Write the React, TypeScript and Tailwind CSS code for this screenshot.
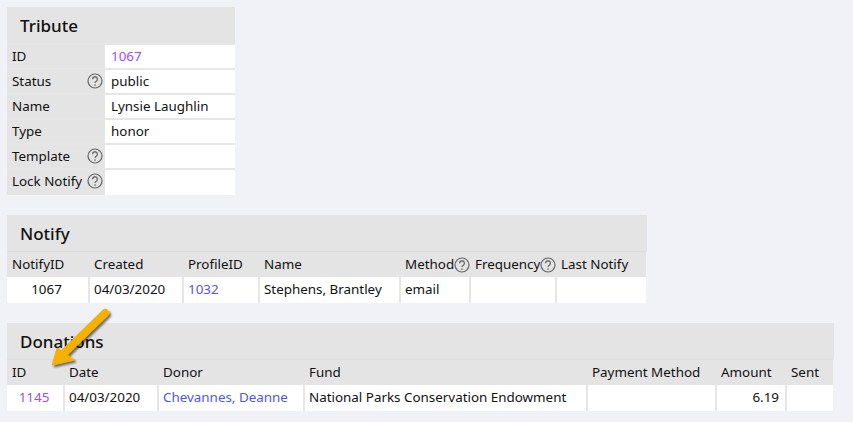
import { type FC, type ReactNode } from 'react';

const font = "font-['Noto_Sans',sans-serif]";

const Help: FC = () => (
    <svg width="16" height="16" viewBox="0 0 16 16" className="shrink-0">
        <circle cx="8" cy="8" r="7" fill="none" stroke="#666" strokeWidth="1.2" />
        <path d="M5.6 6.2a2.4 2.4 0 1 1 3.7 2c-.9.5-1.3.9-1.3 1.8" fill="none" stroke="#666" strokeWidth="1.3" />
        <circle cx="8" cy="12" r=".85" fill="#666" />
    </svg>
);

const Title: FC<{ children: ReactNode }> = ({ children }) => (
    <div className="h-[36px] pl-[13px] pt-[1px] flex items-center text-[17px] font-medium text-[#111] bg-[#e4e4e4]">{children}</div>
);

const tributeRows: { label: string; help?: boolean; value: string; link?: boolean }[] = [
    { label: 'ID', value: '1067', link: true },
    { label: 'Status', help: true, value: 'public' },
    { label: 'Name', value: 'Lynsie Laughlin' },
    { label: 'Type', value: 'honor' },
    { label: 'Template', help: true, value: '' },
    { label: 'Lock Notify', help: true, value: '' },
];

type Col = { label: string; width: string; help?: boolean };

const HeadRow: FC<{ cols: Col[] }> = ({ cols }) => (
    <div className="flex h-[26px] mr-px border-t border-[#dcdcdc] bg-[#e4e4e4]">
        {cols.map((c) => (
            <div key={c.label} className={`${c.width} pl-[6px] first:pl-[5px] flex items-center whitespace-nowrap`}>
                {c.label}
                {c.help && <Help />}
            </div>
        ))}
    </div>
);

const notifyCols: Col[] = [
    { label: 'NotifyID', width: 'w-[81px]' },
    { label: 'Created', width: 'w-[94px]' },
    { label: 'ProfileID', width: 'w-[76px]' },
    { label: 'Name', width: 'w-[141px]' },
    { label: 'Method', width: 'w-[70px]', help: true },
    { label: 'Frequency', width: 'w-[86px]', help: true },
    { label: 'Last Notify', width: 'w-[90px]' },
];

const donationCols: Col[] = [
    { label: 'ID', width: 'w-[56px]' },
    { label: 'Date', width: 'w-[94px]' },
    { label: 'Donor', width: 'w-[146px]' },
    { label: 'Fund', width: 'w-[283px]' },
    { label: 'Payment Method', width: 'w-[129px]' },
    { label: 'Amount', width: 'w-[70px]' },
    { label: 'Sent', width: 'w-[47px]' },
];

const Cell: FC<{ width: string; className?: string; children?: ReactNode }> = ({ width, className = '', children }) => (
    <div className={`${width} h-full flex items-center pl-[4px] pr-[6px] pb-[2px] border-l-2 border-[#e6e6e6] first:border-l-0 whitespace-nowrap ${className}`}>
        {children}
    </div>
);

export default function App() {
    return (
        <div className={`relative w-[853px] h-[422px] overflow-hidden bg-[#f0f2f8] pt-[7px] pl-[7px] text-[13.4px] text-[#111] ${font}`}>
            <section className="w-[228px]">
                <Title>Tribute</Title>
                {tributeRows.map((r) => (
                    <div key={r.label} className="flex h-[25px] last:h-[27px] border-t-2 border-[#e6e6e6] first:border-t first:border-[#dcdcdc]">
                        <div className="w-[98px] bg-[#e4e4e4] pl-[5px] pr-[2px] flex items-start justify-between whitespace-nowrap leading-[20px] pt-[1px]">
                            {r.label}
                            {r.help && (
                                <span className="mt-[2px]">
                                    <Help />
                                </span>
                            )}
                        </div>
                        <div className={`flex-1 bg-white pl-[6px] flex items-start leading-[20px] pt-[1px] ${r.link ? 'text-[#9b4dff]' : ''}`}>{r.value}</div>
                    </div>
                ))}
            </section>

            <section className="w-[640px] mt-[20px]">
                <Title>Notify</Title>
                <HeadRow cols={notifyCols} />
                <div className="flex h-[26px] mr-px bg-white">
                    <Cell width="w-[81px]" className="justify-center">1067</Cell>
                    <Cell width="w-[94px]">04/03/2020</Cell>
                    <Cell width="w-[76px]" className="text-[#4f55f0]">1032</Cell>
                    <Cell width="w-[141px]">Stephens, Brantley</Cell>
                    <Cell width="w-[70px]">email</Cell>
                    <Cell width="w-[86px]" />
                    <Cell width="w-[90px]" />
                </div>
            </section>

            <section className="w-[827px] mt-[20px]">
                <Title>Donations</Title>
                <HeadRow cols={donationCols} />
                <div className="flex h-[26px] mr-px bg-white">
                    <Cell width="w-[56px]" className="justify-center text-[#9b4dff]">1145</Cell>
                    <Cell width="w-[94px]">04/03/2020</Cell>
                    <Cell width="w-[146px]" className="text-[#4f55f0]">Chevannes, Deanne</Cell>
                    <Cell width="w-[283px]">National Parks Conservation Endowment</Cell>
                    <Cell width="w-[129px]" />
                    <Cell width="w-[70px]" className="justify-end">6.19</Cell>
                    <Cell width="w-[47px]" />
                </div>
            </section>

            <svg width="80" height="80" viewBox="0 0 80 80" className="absolute left-[40px] top-[300px]">
                <defs>
                    <filter id="arrowShadow" x="-20%" y="-20%" width="150%" height="150%">
                        <feDropShadow dx="2" dy="2" stdDeviation="1.2" floodColor="#000" floodOpacity="0.55" />
                    </filter>
                </defs>
                <g filter="url(#arrowShadow)">
                    <path d="M65 13 L25 52" stroke="#f5b000" strokeWidth="8" strokeLinecap="round" fill="none" />
                    <path d="M12 65 L17 48 L34 60 Z" fill="#f5b000" stroke="#f5b000" strokeWidth="1" strokeLinejoin="round" />
                </g>
            </svg>
        </div>
    );
}
